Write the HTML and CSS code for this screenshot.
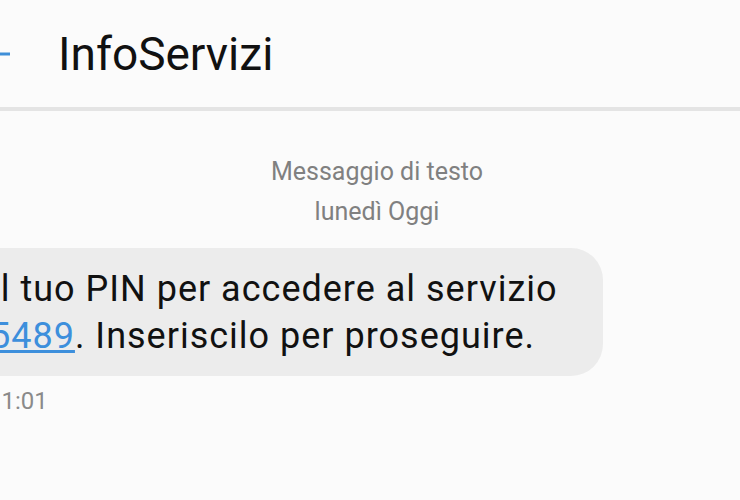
FILE: index.html
```html
<!DOCTYPE html>
<html lang="it">
<head>
    <meta charset="UTF-8">
    <meta name="viewport" content="width=device-width, initial-scale=1.0">
    <title>InfoServizi</title>
    <link rel="stylesheet" href="styles.css">
</head>
<body>
    <header class="topbar">
        <svg class="back" width="40" height="40" viewBox="0 0 40 40">
            <path d="M4 20 H38 M4 20 L18 6 M4 20 L18 34" stroke="#3f8fd8" stroke-width="3" fill="none"/>
        </svg>
        <h1 class="title">InfoServizi</h1>
    </header>
    <main class="thread">
        <div class="meta">
            <div>Messaggio di testo</div>
            <div>lunedì Oggi</div>
        </div>
        <div class="bubble">
            Il tuo PIN per accedere al servizio<br>
            <a href="#">5489</a>. Inseriscilo per proseguire.
        </div>
        <div class="time">11:01</div>
    </main>
</body>
</html>
```

FILE: styles.css
```css
body {
    margin: 0;
    background: #fbfbfb;
    font-family: Roboto, 'Noto Sans', sans-serif;
    overflow: hidden;
}
.topbar {
    height: 107px;
    display: flex;
    align-items: center;
    border-bottom: 4px solid #e4e4e4;
}
.back {
    margin-left: -28px;
    margin-right: 46px;
}
.title {
    margin: 0;
    font-size: 46px;
    font-weight: 400;
    color: #111;
}
.thread {
    padding-top: 41px;
}
.meta {
    padding-left: 14px;
    text-align: center;
    font-size: 25px;
    line-height: 40px;
    color: #808080;
}
.bubble {
    margin: 16px 0 0 -40px;
    width: 643px;
    box-sizing: border-box;
    padding: 18px 20px 16px 30px;
    background: #ececec;
    border-radius: 32px;
    font-size: 36px;
    line-height: 47px;
    letter-spacing: 1px;
    color: #111;
}
.bubble a {
    color: #3d8fdc;
}
.time {
    margin: 11px 0 0 -12px;
    font-size: 24px;
    color: #8a8a8a;
}
```
